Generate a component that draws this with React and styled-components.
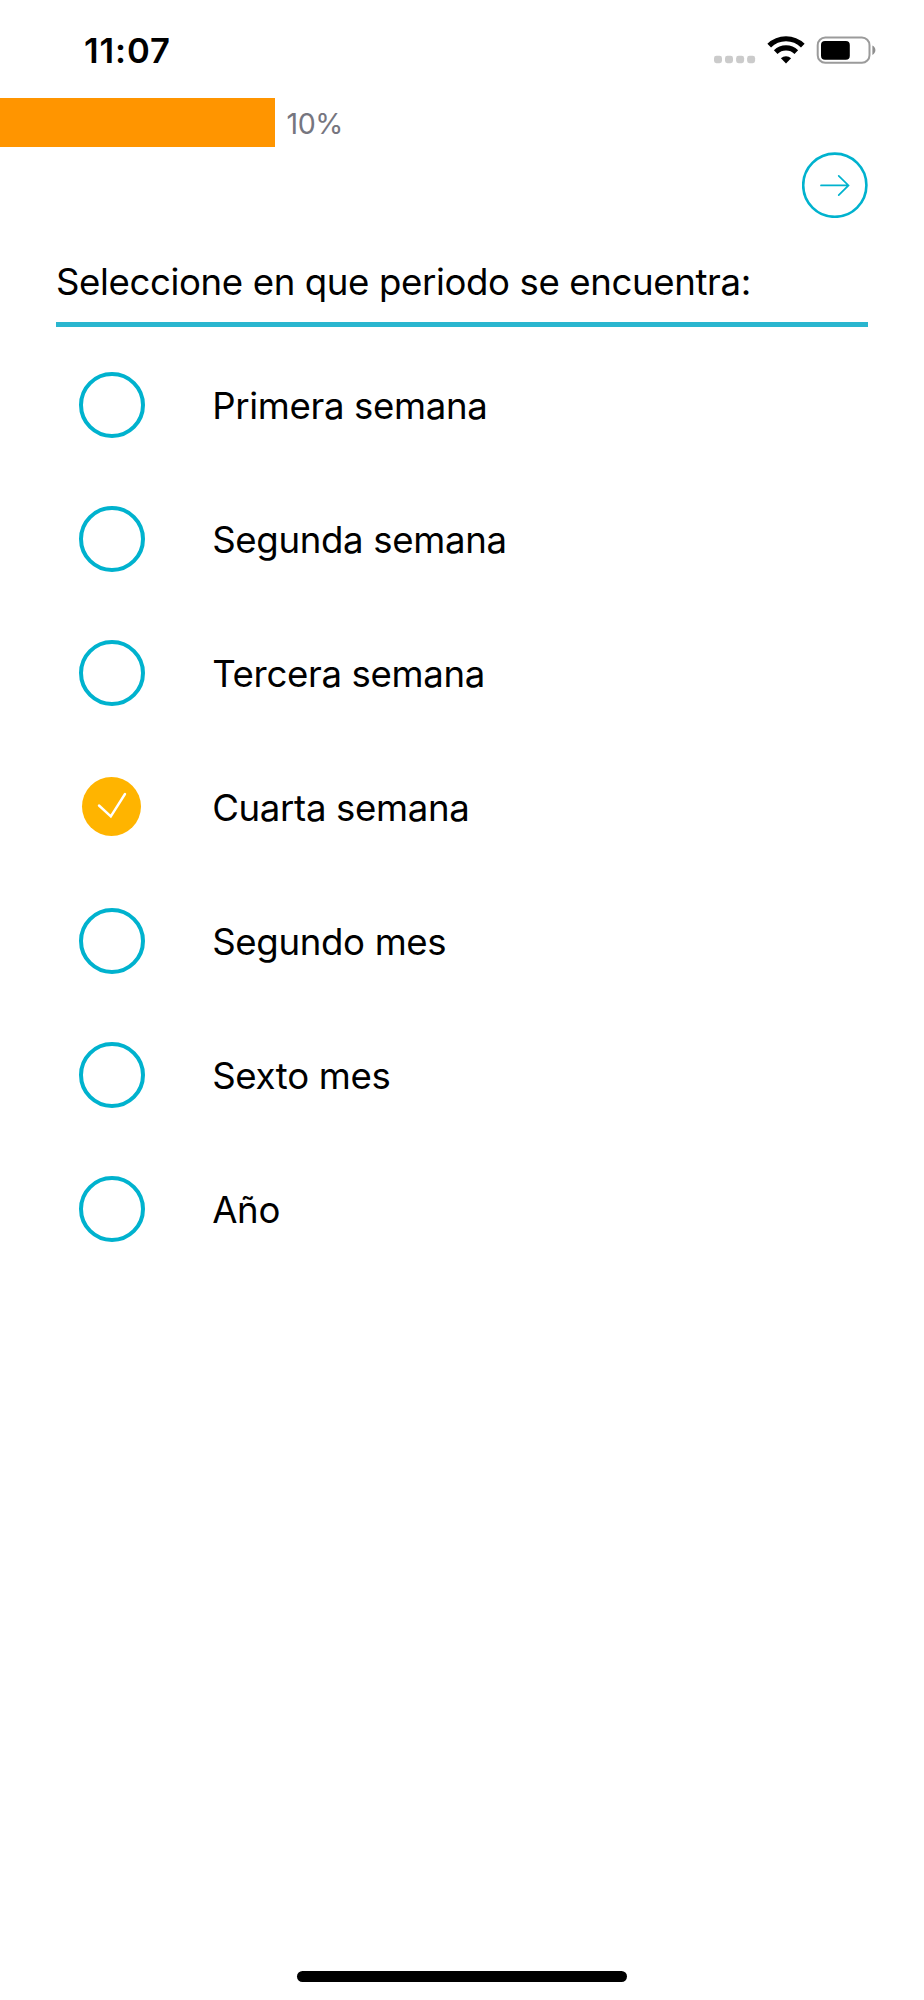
import React, { useState } from 'react';
import styled, { createGlobalStyle } from 'styled-components';

const GlobalStyle = createGlobalStyle`
    * {
        box-sizing: border-box;
    }

    body {
        margin: 0;
        background-color: #fff;
    }
`;

const Screen = styled.div`
    display: flex;
    flex-direction: column;

    width: 924px;
    height: 2000px;

    font-family: Inter, 'Liberation Sans', sans-serif;
    color: #000;
    background-color: #fff;
`;

const StatusBar = styled.header`
    display: flex;
    justify-content: space-between;
    align-items: center;

    height: 98px;
    padding: 2px 47px 0 84px;
`;

const Time = styled.span`
    font-size: 34.6px;
    font-weight: 600;
    line-height: 42px;
    letter-spacing: 0.9px;
`;

const Progress = styled.div`
    display: flex;
    align-items: center;

    height: 49px;
`;

const ProgressFill = styled.div`
    width: 274.6px;
    height: 49px;

    background-color: #ff9500;
`;

const ProgressLabel = styled.span`
    margin-left: 12px;
    padding-top: 1px;

    font-size: 28.6px;
    letter-spacing: -0.5px;
    color: #76767f;
`;

const Toolbar = styled.div`
    display: flex;
    justify-content: flex-end;

    height: 100px;
    padding: 5px 56.4px 0 0;
`;

const NextButton = styled.button`
    width: 66px;
    height: 66px;
    padding: 0;

    border: 0;
    background: none;
    cursor: pointer;
`;

const Question = styled.h1`
    height: 80px;
    margin: 0 56px;
    padding-top: 12px;

    font-size: 36.6px;
    font-weight: 400;
    line-height: 46px;
    letter-spacing: -0.37px;
    white-space: nowrap;

    border-bottom: 5px solid #2ab6cf;
`;

const Options = styled.div`
    display: flex;
    flex-direction: column;

    padding: 11px 56px 0 78.6px;
`;

const Option = styled.div`
    display: flex;
    align-items: center;

    height: 133.95px;

    cursor: pointer;
`;

const Radio = styled.span`
    display: flex;
    justify-content: center;
    align-items: center;

    width: ${({ $checked }) => ($checked ? 59 : 66)}px;
    height: ${({ $checked }) => ($checked ? 59 : 66)}px;
    margin: ${({ $checked }) => ($checked ? '0 3.6px 0 3.4px' : '0')};

    border: ${({ $checked }) => ($checked ? 'none' : '4px solid #00b2ce')};
    border-radius: 50%;
    background-color: ${({ $checked }) => ($checked ? '#ffb400' : 'transparent')};
`;

const OptionText = styled.span`
    margin-left: 67.6px;
    padding-top: 2px;

    font-size: 36.6px;
    line-height: 46px;
    letter-spacing: -0.33px;
`;

const HomeIndicator = styled.div`
    width: 330px;
    height: 11px;
    margin: auto auto 18px;

    border-radius: 6px;
    background-color: #000;
`;

const options = [
    'Primera semana',
    'Segunda semana',
    'Tercera semana',
    'Cuarta semana',
    'Segundo mes',
    'Sexto mes',
    'Año'
];

const StatusIcons = () => (
    <svg width="163" height="28" viewBox="0 0 163 28">
        <g fill="#cbcbcb">
            <rect x="0" y="19.8" width="8" height="7.4" rx="2.4" />
            <rect x="11" y="19.8" width="8" height="7.4" rx="2.4" />
            <rect x="22.1" y="19.8" width="8" height="7.4" rx="2.4" />
            <rect x="33.1" y="19.8" width="8" height="7.4" rx="2.4" />
        </g>
        <g fill="none" stroke="#000" strokeWidth="5.2">
            <path d="M55.2 9.6a24 24 0 0 1 33.6 0" />
            <path d="M61.7 16.1a14.8 14.8 0 0 1 20.6 0" />
        </g>
        <path d="M66.9 22.3a7.6 7.6 0 0 1 10.2 0L72 27.4z" fill="#000" />
        <rect x="103.7" y="1.6" width="51.8" height="25.2" rx="7.6" fill="none" stroke="#9b9b9b" strokeWidth="2" />
        <rect x="107" y="5" width="28.8" height="18.8" rx="4" fill="#000" />
        <path d="M158.4 9.6c4 1.7 4 7.6 0 9.3z" fill="#8f8f8f" />
    </svg>
);

const ArrowIcon = () => (
    <svg width="66" height="66" viewBox="0 0 66 66" fill="none" stroke="#00b2ce">
        <circle cx="32.8" cy="33.2" r="31.6" strokeWidth="2.6" />
        <path d="M19 33.4h27.5M36.7 23.8l9.8 9.6-9.8 9.7" strokeWidth="1.7" strokeLinecap="round" />
    </svg>
);

const CheckIcon = () => (
    <svg width="59" height="59" viewBox="0 0 59 59" fill="none" stroke="#fff">
        <path d="M17 28.5l11.8 10.8 14.2-22.3" strokeWidth="2.4" strokeLinecap="round" />
    </svg>
);

const App = () => {
    const [selected, setSelected] = useState('Cuarta semana');

    return (
        <Screen>
            <GlobalStyle />
            <StatusBar>
                <Time>11:07</Time>
                <StatusIcons />
            </StatusBar>
            <Progress>
                <ProgressFill />
                <ProgressLabel>10%</ProgressLabel>
            </Progress>
            <Toolbar>
                <NextButton aria-label="Siguiente">
                    <ArrowIcon />
                </NextButton>
            </Toolbar>
            <Question>Seleccione en que periodo se encuentra:</Question>
            <Options role="radiogroup">
                {options.map(option => (
                    <Option
                        key={option}
                        role="radio"
                        aria-checked={option === selected}
                        onClick={() => setSelected(option)}
                    >
                        <Radio $checked={option === selected}>
                            {option === selected && <CheckIcon />}
                        </Radio>
                        <OptionText>{option}</OptionText>
                    </Option>
                ))}
            </Options>
            <HomeIndicator />
        </Screen>
    );
};

export default App;
